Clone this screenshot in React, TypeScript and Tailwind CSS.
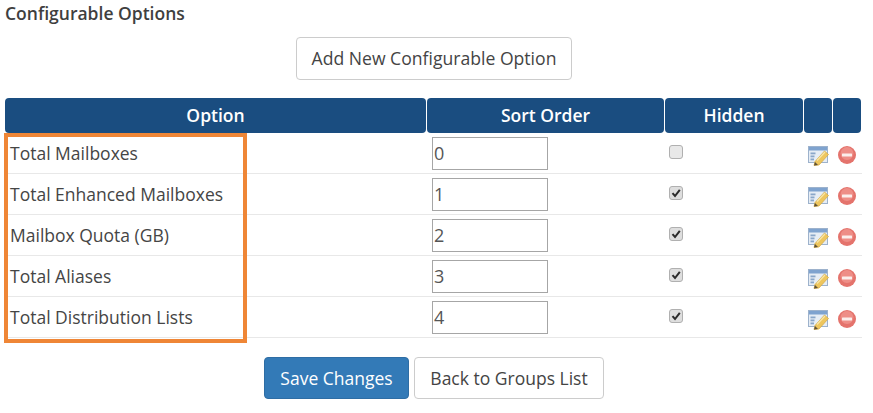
import React from 'react';

const ROWS = [
  { name: 'Total Mailboxes', order: '0', hidden: false },
  { name: 'Total Enhanced Mailboxes', order: '1', hidden: true },
  { name: 'Mailbox Quota (GB)', order: '2', hidden: true },
  { name: 'Total Aliases', order: '3', hidden: true },
  { name: 'Total Distribution Lists', order: '4', hidden: true },
];

function EditIcon() {
  return (
    <svg width="21" height="20" viewBox="0 0 21 20">
      <rect x="0.5" y="0.5" width="19" height="16" fill="#e6edf5" stroke="#9db2cc" />
      <rect x="1" y="1" width="18" height="3.5" fill="#7fa3cf" />
      <rect x="2.5" y="6.5" width="5" height="1.8" fill="#8aa7c9" />
      <rect x="2.5" y="9.5" width="4" height="1.8" fill="#8aa7c9" />
      <rect x="2.5" y="12.5" width="3.5" height="1.8" fill="#8aa7c9" />
      <path d="M7 15.5 L16.5 5 L20.5 8.5 L11 19 L6 19.5 Z" fill="#eec65e" stroke="#d3a740" strokeWidth="0.7" />
      <path d="M9 14.5 L17 6" stroke="#f8e6a8" strokeWidth="1.2" />
      <path d="M6 19.5 L7 16 L10 19 Z" fill="#5f5238" />
    </svg>
  );
}

function RemoveIcon() {
  return (
    <svg width="18" height="18" viewBox="0 0 18 18">
      <circle cx="9" cy="9" r="9" fill="#e4736c" />
      <circle cx="9" cy="7.5" r="6.5" fill="#ee8e87" />
      <rect x="4" y="7.5" width="10" height="3" rx="0.5" fill="#fbeeec" />
    </svg>
  );
}

function Checkbox({ checked }: { checked: boolean }) {
  return (
    <div className={`w-[14px] h-[14px] rounded-[3px] border border-[#b0b0b0] flex items-center justify-center ${checked ? 'bg-[#dedede]' : 'bg-[#e8e8e8]'}`}>
      {checked && (
        <svg width="10" height="10" viewBox="0 0 10 10">
          <path d="M1.5 5.2 L4 8 L8.8 1.8" fill="none" stroke="#2b2b2b" strokeWidth="2" />
        </svg>
      )}
    </div>
  );
}

export default function App() {
  return (
    <div className="relative w-[873px] h-[413px] overflow-hidden bg-white text-[#333] font-['Open_Sans',sans-serif]">
      <h3 className="pl-[5px] pt-[2px] text-[17.5px] leading-[22px] font-semibold text-[#3f3f3f]">Configurable Options</h3>

      <div className="flex justify-center w-[868px] mt-[13px]">
        <button className="w-[276px] h-[43px] rounded-[4px] border border-[#cccccc] bg-white text-[17.6px] text-[#444]">
          Add New Configurable Option
        </button>
      </div>

      <div className="ml-[5px] mt-[18px] w-[857px]">
        {/* Header */}
        <div className="flex gap-px h-[35px] text-white text-[17.5px] font-semibold">
          <div className="w-[421px] bg-[#1a4d80] rounded-[4px] flex items-center justify-center">Option</div>
          <div className="w-[237px] bg-[#1a4d80] rounded-[4px] flex items-center justify-center">Sort Order</div>
          <div className="w-[138px] bg-[#1a4d80] rounded-[4px] flex items-center justify-center">Hidden</div>
          <div className="w-[28px] bg-[#1a4d80] rounded-[4px]" />
          <div className="w-[28px] bg-[#1a4d80] rounded-[4px]" />
        </div>

        {ROWS.map(row => (
          <div key={row.name} className="flex h-[41px] border-b border-[#e8e8e8] text-[17.5px] text-[#454545]">
            <div className="w-[422px] pl-[5px] pt-[8px] leading-[24px]">{row.name}</div>
            <div className="w-[238px] pl-[5px] pt-[4px]">
              <div className="w-[116px] h-[33px] border border-[#a6a6a6] pl-[1px] leading-[31px] text-[18px] text-[#555]">{row.order}</div>
            </div>
            <div className="w-[138px] pl-[4px] pt-[12px]">
              <Checkbox checked={row.hidden} />
            </div>
            <div className="flex-1 flex gap-[9px] pl-[5px] pt-[13px] items-start">
              <EditIcon />
              <RemoveIcon />
            </div>
          </div>
        ))}
      </div>

      <div className="flex gap-[5px] ml-[264px] mt-[19px]">
        <button className="w-[145px] h-[42px] rounded-[4px] bg-[#337ab7] border border-[#2e6da4] text-white text-[17.5px]">Save Changes</button>
        <button className="w-[190px] h-[42px] rounded-[4px] bg-white border border-[#cccccc] text-[#444] text-[17.5px]">Back to Groups List</button>
      </div>

      {/* Highlight box over the first column */}
      <div className="absolute left-[4px] top-[133px] w-[243px] h-[210px] border-[4px] border-[#ef8636]" />
    </div>
  );
}
